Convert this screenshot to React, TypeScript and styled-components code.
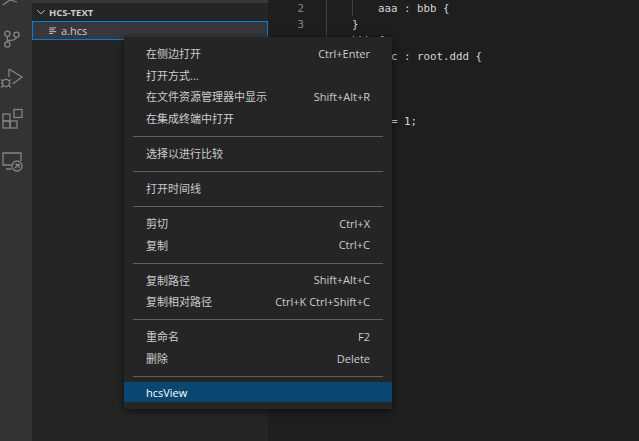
import styled, { createGlobalStyle } from 'styled-components';

const GlobalStyle = createGlobalStyle`
  html, body {
    margin: 0;
    width: 639px;
    height: 441px;
    overflow: hidden;
    background: #1e1e1e;
  }
`;

const menuGroups = [
  [
    { label: '在侧边打开', keys: 'Ctrl+Enter' },
    { label: '打开方式...' },
    { label: '在文件资源管理器中显示', keys: 'Shift+Alt+R' },
    { label: '在集成终端中打开' },
  ],
  [{ label: '选择以进行比较' }],
  [{ label: '打开时间线' }],
  [
    { label: '剪切', keys: 'Ctrl+X' },
    { label: '复制', keys: 'Ctrl+C' },
  ],
  [
    { label: '复制路径', keys: 'Shift+Alt+C' },
    { label: '复制相对路径', keys: 'Ctrl+K Ctrl+Shift+C' },
  ],
  [
    { label: '重命名', keys: 'F2' },
    { label: '删除', keys: 'Delete' },
  ],
  [{ label: 'hcsView', active: true }],
];

const codeLines = [
  { no: 2, text: '    aaa : bbb {', guide: true },
  { no: 3, text: '}' },
  { text: 'bbb {' },
  { text: '      c : root.ddd {' },
  { text: '' },
  { text: '' },
  { text: '' },
  { text: '      = 1;' },
];

const App = () => {
  return (
    <Window>
      <GlobalStyle />
      <ActivityBar>
        <BarIcon viewBox="0 0 24 24">
          <path d="M3 22 L10 17 L17 19" />
        </BarIcon>
        <BarIcon viewBox="0 0 24 24">
          <circle cx="7.3" cy="8.8" r="2.6" />
          <circle cx="7.3" cy="19.5" r="2.6" />
          <circle cx="16.5" cy="9.8" r="2.6" />
          <path d="M7.3 11.4 V16.9 M7.3 15.5 C12 15.5 16 15 16.5 12.4" />
        </BarIcon>
        <BarIcon viewBox="0 0 24 24">
          <path d="M9 3 L22 11 L12.5 18 M9 3 V11" />
          <circle cx="6" cy="17" r="3.6" />
          <path d="M1 13.5 L3.2 15 M1 17 H2.4 M1 21.5 L3.2 19.5 M11 13.5 L8.8 15 M11 21.5 L8.8 19.5" />
        </BarIcon>
        <BarIcon viewBox="0 0 24 24">
          <rect x="3" y="6" width="7" height="7" />
          <rect x="3" y="13" width="7" height="7" />
          <rect x="10" y="13" width="7" height="7" />
          <rect x="14" y="1.5" width="8" height="8" />
        </BarIcon>
        <BarIcon viewBox="0 0 24 24">
          <path d="M11.5 16 H3 V4 H21 V12 M6 20 H11.5" />
          <circle cx="17" cy="17" r="5" />
          <path d="M15 19 L19 15 M15.5 15.5 H19 V19" />
        </BarIcon>
      </ActivityBar>

      <SideBar>
        <TopStrip />
        <SectionHeader>
          <Chevron viewBox="0 0 16 16">
            <path d="M3 5.5 L8 10.5 L13 5.5" />
          </Chevron>
          HCS-TEXT
        </SectionHeader>
        <FileRow>
          <FileGlyph viewBox="0 0 16 16">
            <path d="M2 3 H13 M2 6 H10 M2 9 H13 M2 12 H8" />
          </FileGlyph>
          a.hcs
        </FileRow>
      </SideBar>

      <Editor>
        <Gutter>
          {codeLines.map((line, i) => (
            <LineNumber key={i}>{line.no}</LineNumber>
          ))}
        </Gutter>
        <Code>
          {codeLines.map((line, i) => (
            <CodeLine key={i} $guide={line.guide}>
              {line.text}
            </CodeLine>
          ))}
        </Code>
      </Editor>

      <Menu>
        {menuGroups.map((group, i) => (
          <MenuGroup key={i}>
            {group.map((item) => (
              <MenuItem key={item.label} $active={item.active}>
                <span>{item.label}</span>
                {item.keys && <span>{item.keys}</span>}
              </MenuItem>
            ))}
          </MenuGroup>
        ))}
      </Menu>
    </Window>
  );
};

export default App;

const Window = styled.div`
  position: relative;
  display: flex;
  width: 639px;
  height: 441px;
  overflow: hidden;
  font-family: 'Open Sans', 'Noto Sans CJK SC', sans-serif;
`;

const ActivityBar = styled.div`
  width: 32px;
  flex: none;
  background: #333333;
  display: flex;
  flex-direction: column;
  align-items: flex-start;
  gap: 17.5px;
  margin-top: -17px;
`;

const BarIcon = styled.svg`
  width: 24px;
  height: 24px;
  flex: none;
  fill: none;
  stroke: #858585;
  stroke-width: 1.3;
`;

const SideBar = styled.div`
  width: 236px;
  flex: none;
  background: #252526;
  color: #cccccc;
`;

const TopStrip = styled.div`
  height: 3px;
  background: #383838;
`;

const SectionHeader = styled.div`
  display: flex;
  align-items: center;
  height: 18px;
  font-size: 9.5px;
  font-weight: 700;
  color: #cccccc;
  gap: 2px;
  padding-left: 3px;
`;

const Chevron = styled.svg`
  width: 12px;
  height: 12px;
  fill: none;
  stroke: #c5c5c5;
  stroke-width: 1.3;
`;

const FileRow = styled.div`
  display: flex;
  align-items: center;
  box-sizing: border-box;
  height: 19px;
  background: #37373d;
  border: 1px solid #007fd4;
  padding-left: 15px;
  gap: 3px;
  font-size: 11px;
`;

const FileGlyph = styled.svg`
  width: 10px;
  height: 10px;
  fill: none;
  stroke: #c5c5c5;
  stroke-width: 1.5;
`;

const Editor = styled.div`
  flex: 1;
  display: flex;
  background: #1e1e1e;
`;

const Gutter = styled.div`
  width: 59px;
  height: 37px;
  flex: none;
  padding-top: 1px;
  border-right: 1px solid #404040;
  box-sizing: border-box;
`;

const LineNumber = styled.div`
  height: 16.15px;
  line-height: 16px;
  width: 36px;
  text-align: right;
  font-family: 'DejaVu Sans Mono', 'Liberation Mono', monospace;
  font-size: 10.8px;
  color: #858585;
`;

const Code = styled.div`
  padding-left: 25px;
  font-family: 'DejaVu Sans Mono', 'Liberation Mono', monospace;
  font-size: 10.8px;
  color: #d4d4d4;
`;

const CodeLine = styled.div<{ $guide?: boolean }>`
  height: 16.15px;
  line-height: 18px;
  white-space: pre;
  box-shadow: ${({ $guide }) => ($guide ? 'inset 1px 0 0 #404040' : 'none')};
`;

const Menu = styled.div`
  position: absolute;
  left: 124px;
  top: 37px;
  width: 268px;
  height: 372px;
  box-sizing: border-box;
  padding-top: 6px;
  background: #252526;
  box-shadow: 0 2px 8px rgba(0, 0, 0, 0.6);
  color: #cccccc;
  font-size: 11px;
`;

const MenuGroup = styled.div`
  display: flex;
  flex-direction: column;
  gap: 1.7px;
  margin: 0 9px;
  padding: 6px 0 8px;
  border-bottom: 1px solid #5f5f5f;

  &:first-child {
    padding-top: 0;
  }

  &:last-child {
    border-bottom: none;
    margin: 0;
    padding: 5px 0 0;
  }
`;

const MenuItem = styled.div<{ $active?: boolean }>`
  display: flex;
  justify-content: space-between;
  align-items: center;
  height: 20px;
  padding: 0 ${({ $active }) => ($active ? '22px' : '13px')};
  background: ${({ $active }) => ($active ? '#094771' : 'transparent')};
  color: ${({ $active }) => ($active ? '#ffffff' : '#cccccc')};
`;
